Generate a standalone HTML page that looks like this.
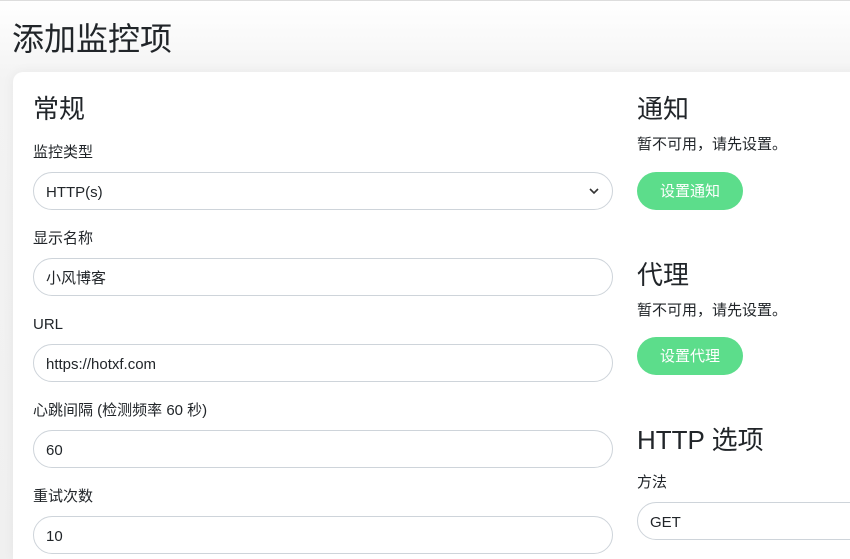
<!DOCTYPE html>
<html style="overflow:hidden;height:559px"><head><meta charset="utf-8"><style>
body{margin:0;width:850px;height:559px;overflow:hidden;background:linear-gradient(#fff 0,#f3f3f3 80px,#f0f0f0);font-family:"Liberation Sans","Noto Sans CJK SC",sans-serif;color:#212529;position:relative}
.top{position:absolute;left:0;right:0;top:0;height:1px;background:#ddd}
h1{position:absolute;left:12px;top:14px;margin:0;font-size:32px;font-weight:400;line-height:50px}
.card{position:absolute;left:13px;top:72px;width:860px;height:487px;background:#fff;border-radius:10px 10px 0 0;box-shadow:0 0 12px rgba(0,0,0,.05)}
.a{position:absolute;white-space:nowrap}
.h2{font-size:26px;line-height:32px}
.lbl{font-size:15px;line-height:20px}
.in{position:absolute;left:33px;width:578px;height:34px;padding-top:2px;border:1px solid #ced4da;border-radius:19px;background:#fff;font-size:15px;line-height:36px;padding-left:12px;box-sizing:content-box}
.btn{position:absolute;left:637px;width:106px;height:38px;border-radius:19px;background:#5cdd8b;color:#fff;font-size:15px;line-height:40px;text-align:center}
</style></head><body>
<div class="top"></div>
<h1>添加监控项</h1>
<div class="card"></div>
<div class="a h2" style="left:33px;top:93px">常规</div>
<div class="a lbl" style="left:33px;top:143px">监控类型</div>
<div class="in" style="top:172px;width:566px">HTTP(s)
<svg style="position:absolute;right:12px;top:13px" width="12" height="10" viewBox="0 0 12 10"><path d="M2 3l4 4 4-4" fill="none" stroke="#333" stroke-width="1.6"/></svg></div>
<div class="a lbl" style="left:33px;top:229px">显示名称</div>
<div class="in" style="top:258px;width:566px">小风博客</div>
<div class="a lbl" style="left:33px;top:315px">URL</div>
<div class="in" style="top:344px;width:566px">https://hotxf.com</div>
<div class="a lbl" style="left:33px;top:401px">心跳间隔 (检测频率 60 秒)</div>
<div class="in" style="top:430px;width:566px">60</div>
<div class="a lbl" style="left:33px;top:487px">重试次数</div>
<div class="in" style="top:516px;width:566px">10</div>

<div class="a h2" style="left:637px;top:93px">通知</div>
<div class="a lbl" style="left:637px;top:135px">暂不可用，请先设置。</div>
<div class="btn" style="top:172px">设置通知</div>
<div class="a h2" style="left:637px;top:259px">代理</div>
<div class="a lbl" style="left:637px;top:301px">暂不可用，请先设置。</div>
<div class="btn" style="top:337px">设置代理</div>
<div class="a h2" style="left:637px;top:424px">HTTP 选项</div>
<div class="a lbl" style="left:637px;top:473px">方法</div>
<div class="in" style="left:637px;top:502px;width:300px">GET</div>
</body></html>
